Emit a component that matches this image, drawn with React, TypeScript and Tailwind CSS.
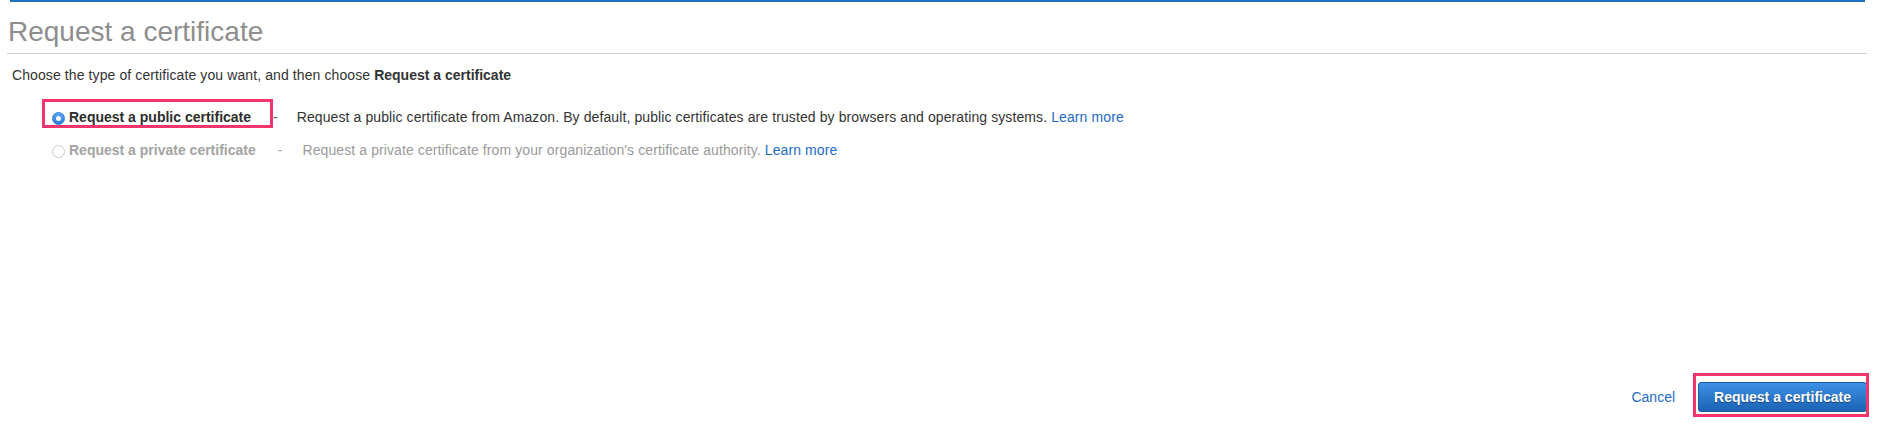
const Radio = ({ checked }: { checked: boolean }) =>
  checked ? (
    <span className="mt-[3px] ml-[52px] flex h-[13px] w-[13px] shrink-0 items-center justify-center rounded-full border border-[#3380d6] bg-linear-to-b from-[#5aa5f5] to-[#2a7cdc]">
      <span className="h-[5px] w-[5px] rounded-full bg-white" />
    </span>
  ) : (
    <span className="mt-[3px] ml-[52px] h-[13px] w-[13px] shrink-0 rounded-full border border-[#c9c9c9] bg-white" />
  );

interface OptionRowProps {
  checked: boolean;
  label: string;
  description: string;
  descGap: string;
}

const OptionRow = ({ checked, label, description, descGap }: OptionRowProps) => (
  <div className="flex h-5 items-center leading-5 whitespace-nowrap">
    <Radio checked={checked} />
    <span className={`ml-[4px] font-bold ${checked ? "text-[#2e2e2e]" : "text-[#a3a3a3]"}`}>
      {label}
    </span>
    <span className={`ml-[22px] ${checked ? "text-[#555]" : "text-[#a3a3a3]"}`}>-</span>
    <span className={`${descGap} tracking-[0.1px] ${checked ? "text-[#333]" : "text-[#9a9a9a]"}`}>
      {description}{" "}
      <a className="text-[#1e6bc4]">Learn more</a>
    </span>
  </div>
);

export default function App() {
  return (
    <div className="h-[442px] w-[1880px] bg-white font-['Liberation_Sans',Arial,sans-serif] text-[14px]">
      {/* top accent */}
      <div className="ml-[10px] mr-[15px] h-[2px] bg-[#1f6fc1]" />

      {/* heading */}
      <div className="ml-[7px] mr-[13px] mt-[14px] border-b border-[#cfcfcf] pb-[5px]">
        <h1 className="pl-[1px] text-[28px] leading-8 text-[#8e8e8e]">Request a certificate</h1>
      </div>

      <p className="ml-[12px] mt-[11px] leading-5 tracking-[0.1px] text-[#333]">
        Choose the type of certificate you want, and then choose <b className="tracking-normal">Request a certificate</b>
      </p>

      {/* options */}
      <div className="relative mt-[22px] flex flex-col gap-[13px]">
        <OptionRow
          checked
          label="Request a public certificate"
          description="Request a public certificate from Amazon. By default, public certificates are trusted by browsers and operating systems."
          descGap="ml-[19px]"
        />
        <OptionRow
          checked={false}
          label="Request a private certificate"
          description="Request a private certificate from your organization's certificate authority."
          descGap="ml-[20px]"
        />
        {/* highlight */}
        <div className="absolute left-[42px] top-[-8px] h-[29px] w-[231px] border-[3px] border-[#f2366d]" />
      </div>

      {/* actions */}
      <div className="mr-[13px] mt-[222px] flex items-center justify-end">
        <a className="mr-[23px] text-[#1e6bc4]">Cancel</a>
        <div className="relative">
          <button className="h-[30px] rounded-[3px] border border-[#1a5aa2] bg-linear-to-b from-[#3d91e6] to-[#1b63b5] px-[15px] font-bold text-white [text-shadow:0_1px_1px_rgba(0,0,0,0.4)]">
            Request a certificate
          </button>
          <div className="absolute -bottom-[5px] -left-[5px] -right-[2px] -top-[9px] border-[3px] border-[#f2366d]" />
        </div>
      </div>
    </div>
  );
}
